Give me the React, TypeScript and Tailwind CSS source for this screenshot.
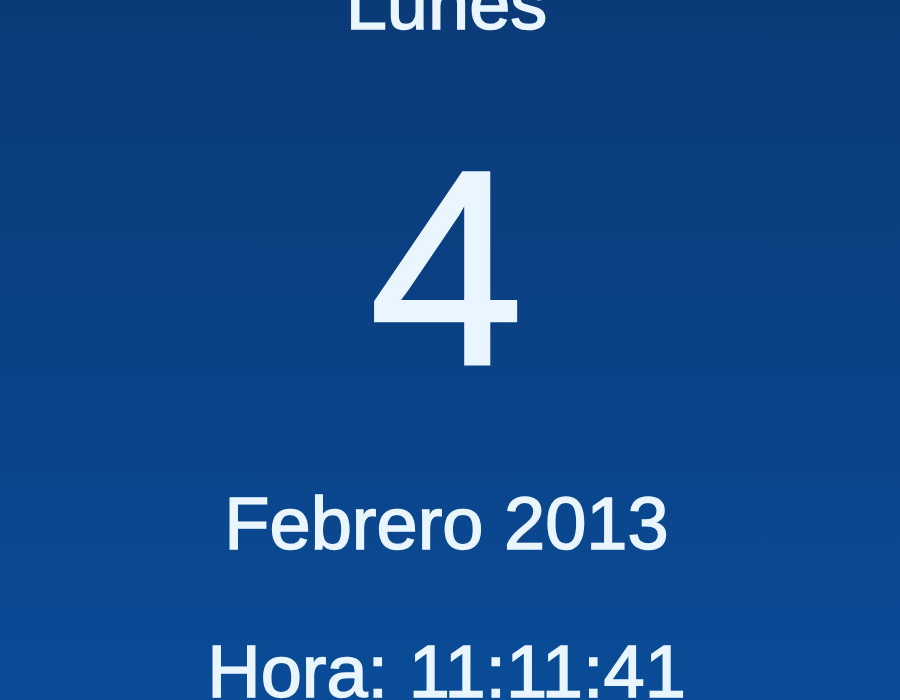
import React from "react";

export default function App() {
  return (
    <div
      className="w-[900px] h-[700px] overflow-hidden bg-gradient-to-b from-[#0b3a78] via-[#0a4285] to-[#0a4c98] flex flex-col items-center pr-[7px] text-[#eaf6ff] [-webkit-text-stroke:1.5px_#eaf6ff]"
      style={{ fontFamily: '"Liberation Sans", Arial, sans-serif' }}
    >
      <div className="text-[74px] leading-[74px] mt-[-33px] whitespace-nowrap">Lunes</div>
      <div className="text-[278px] leading-[278px] mt-[88px] whitespace-nowrap [-webkit-text-stroke:3px_#eaf6ff]">4</div>
      <div className="text-[74px] leading-[74px] mt-[80px] whitespace-nowrap">Febrero 2013</div>
      <div className="text-[74px] leading-[74px] mt-[74px] whitespace-nowrap">Hora: 11:11:41</div>
    </div>
  );
}
